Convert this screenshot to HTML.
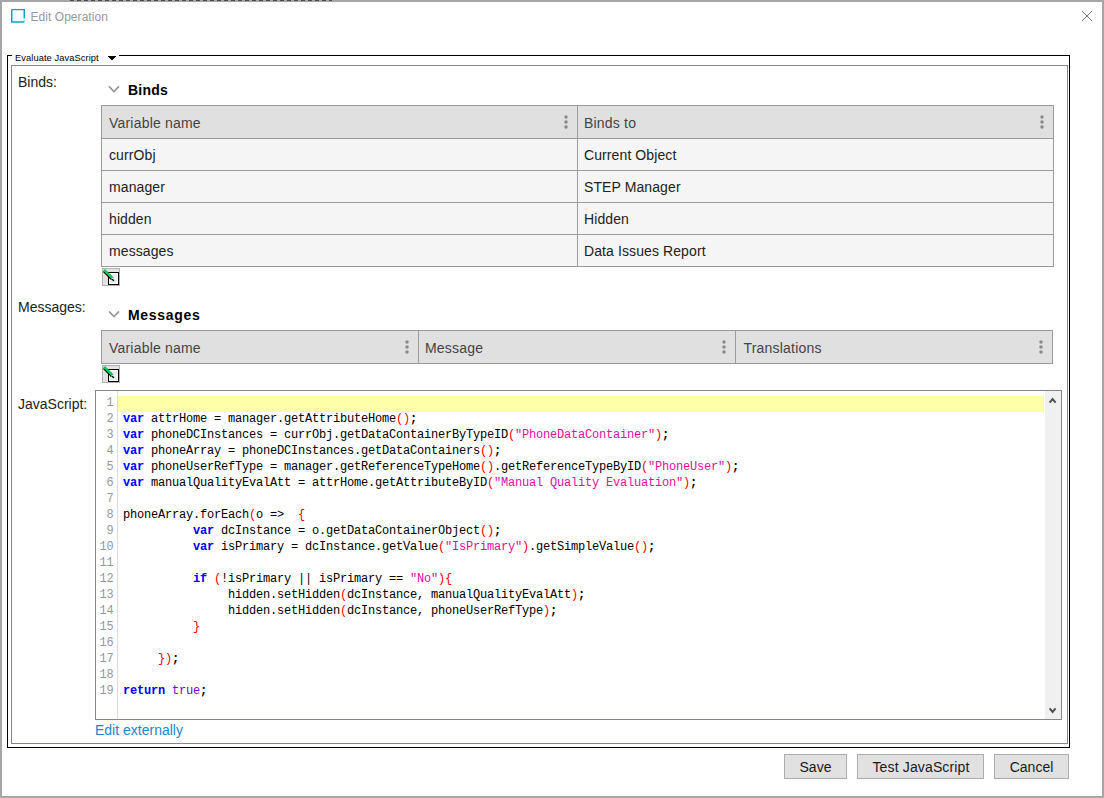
<!DOCTYPE html>
<html lang="en">
<head>
<meta charset="utf-8">
<title>Edit Operation</title>
<style>
html,body{margin:0;padding:0;}
body{width:1104px;height:798px;overflow:hidden;background:#fff;position:relative;
  font-family:"Liberation Sans",sans-serif;font-size:14px;color:#1e1e1e;}
.abs{position:absolute;}
#win{position:absolute;left:0;top:0;width:1100px;height:794px;border:2px solid #a6a6a6;background:#fff;}
.t{position:absolute;white-space:pre;line-height:16px;height:16px;}
#title{left:30.5px;top:9px;font-size:12px;color:#999;letter-spacing:0.05px;}
#fs-l{left:7px;top:55px;width:1px;height:693px;background:#000;}
#fs-r{left:1069px;top:55px;width:1px;height:693px;background:#000;}
#fs-b{left:7px;top:747px;width:1063px;height:1px;background:#000;}
#fs-t1{left:7px;top:55px;width:5px;height:1px;background:#000;}
#fs-t2{left:119px;top:55px;width:951px;height:1px;background:#000;}
#legend{left:15px;top:51px;font-size:9.3px;color:#000;line-height:14px;height:14px;letter-spacing:.08px;}
#panel{left:11px;top:65px;width:1055px;height:677px;border:1px solid #828790;}
.lbl{font-size:14px;color:#222;}
.sec{font-size:14px;font-weight:bold;color:#000;letter-spacing:.25px;}
table.g{position:absolute;border-collapse:collapse;table-layout:fixed;font-size:14px;}
table.g td,table.g th{border:1px solid #9b9b9b;height:31px;padding:0 0 0 7px;text-align:left;font-weight:normal;
  vertical-align:middle;position:relative;overflow:hidden;white-space:nowrap;}
table.g th{background:#e0e0e0;color:#444;height:30px;padding-top:2px;font-size:14px;letter-spacing:.2px;}
table.g td{background:#f5f5f5;color:#222;letter-spacing:.1px;}
table.g td+td,table.g th+th{padding-left:6px;}
table.g th+th+th{padding-left:7.5px;}
.dots{position:absolute;right:9px;top:9px;width:4px;height:14px;}
.dots circle{fill:#8a8a8a;}
.ico{position:absolute;width:16px;height:16px;border:1px solid #adadad;background:#e1e1e1;}
#ed{left:95px;top:390px;width:965px;height:328px;border:1px solid #828790;background:#fff;overflow:hidden;}
#gut{left:117px;top:391px;width:1px;height:328px;background:#dcdcdc;}
#hl{left:118px;top:396px;width:926px;height:16px;background:#ffffaa;}
#sb{left:1045px;top:391px;width:16px;height:328px;background:#f0f0f0;}
.ln{position:absolute;left:96.5px;width:17px;text-align:right;font-family:"Liberation Mono",monospace;font-size:11.9px;
  letter-spacing:-0.141px;color:#989898;margin-top:-1px;line-height:16px;height:16px;white-space:pre;}
.cl{position:absolute;left:123px;font-family:"Liberation Mono",monospace;font-size:12px;letter-spacing:-0.2012px;
  color:#000;line-height:16px;height:16px;white-space:pre;margin-top:-1px;}
.k{color:#0000fa;font-weight:bold;}
.b{color:#6a10c8;}
.p{color:#f00;}
.s{color:#e0109c;}
#link{left:95px;top:722px;color:#1b87cb;}
.btn{position:absolute;top:754px;height:23px;border:1px solid #adadad;background:#e1e1e1;color:#1a1a1a;font-size:14px;
  text-align:center;line-height:25px;}
</style>
</head>
<body>
<div id="win"></div>

<div class="abs" style="left:70px;top:0;width:262px;height:1px;background:repeating-linear-gradient(90deg,#4a4a4a 0 4px,#a6a6a6 4px 7px)"></div>
<!-- title bar -->
<svg class="abs" style="left:11px;top:9px" width="14" height="14" viewBox="0 0 14 14">
  <path d="M0.75 0.5 H13.25 V9.5 M13.25 11.5 V12 M13.5 13 H0.75 V0.5" fill="none" stroke="#0aa5bd" stroke-width="1.5"/>
</svg>
<div class="t" id="title">Edit Operation</div>
<svg class="abs" style="left:1081px;top:10px" width="12" height="12" viewBox="0 0 12 12">
  <path d="M1 1 L11 11 M11 1 L1 11" stroke="#808080" stroke-width="1" fill="none"/>
</svg>

<!-- titled border -->
<div class="abs" id="fs-l"></div><div class="abs" id="fs-r"></div><div class="abs" id="fs-b"></div>
<div class="abs" id="fs-t1"></div><div class="abs" id="fs-t2"></div>
<div class="t" id="legend">Evaluate JavaScript</div>
<svg class="abs" style="left:108px;top:56px" width="8" height="4" viewBox="0 0 8 4" shape-rendering="crispEdges"><path d="M0 0H8V1H7V2H6V3H5V4H3V3H2V2H1V1H0Z" fill="#000"/></svg>
<div class="abs" id="panel"></div>

<!-- Binds -->
<div class="t lbl" style="left:18px;top:74px">Binds:</div>
<svg class="abs" style="left:108px;top:85px" width="12" height="8" viewBox="0 0 12 8"><path d="M1 1.4 L6 6.6 L11 1.4" fill="none" stroke="#979797" stroke-width="1.6"/></svg>
<div class="t sec" style="left:128px;top:82px">Binds</div>
<table class="g" style="left:101px;top:105px;width:953px">
  <colgroup><col style="width:476px"><col style="width:476px"></colgroup>
  <tr><th>Variable name<svg class="dots" width="4" height="14" viewBox="0 0 4 14"><circle cx="2" cy="2" r="1.75"/><circle cx="2" cy="7" r="1.75"/><circle cx="2" cy="12" r="1.75"/></svg></th><th>Binds to<svg class="dots" width="4" height="14" viewBox="0 0 4 14"><circle cx="2" cy="2" r="1.75"/><circle cx="2" cy="7" r="1.75"/><circle cx="2" cy="12" r="1.75"/></svg></th></tr>
  <tr><td>currObj</td><td>Current Object</td></tr>
  <tr><td>manager</td><td>STEP Manager</td></tr>
  <tr><td>hidden</td><td>Hidden</td></tr>
  <tr><td>messages</td><td>Data Issues Report</td></tr>
</table>
<svg class="abs" style="left:102px;top:268px" width="18" height="18" viewBox="0 0 18 18">
  <rect x="0.5" y="0.5" width="17" height="17" fill="#e2e2e2" stroke="#b0b0b0"/>
  <rect x="6.5" y="4.5" width="10" height="12" fill="#fff" stroke="#000"/>
  <rect x="8" y="6" width="7" height="9" fill="#ececec"/>
  <path d="M1.5 3.5 L9.2 11.3" stroke="#000" stroke-width="1.4" fill="none"/>
  <path d="M2.6 2.7 L10.2 9.9" stroke="#00c850" stroke-width="2.3" fill="none" stroke-linecap="round"/>
  <path d="M3.4 1.9 L11.2 9.3" stroke="#009a20" stroke-width="0.9" stroke-dasharray="1 1" fill="none"/>
  <path d="M9.2 10.6 L11 9.4 L11.4 11.6 Z" fill="#fff"/>
  <path d="M10 11.2 L11.6 12.5" stroke="#000" stroke-width="1.4" fill="none" stroke-linecap="round"/>
</svg>

<!-- Messages -->
<div class="t lbl" style="left:18px;top:299px">Messages:</div>
<svg class="abs" style="left:108px;top:310px" width="12" height="8" viewBox="0 0 12 8"><path d="M1 1.4 L6 6.6 L11 1.4" fill="none" stroke="#979797" stroke-width="1.6"/></svg>
<div class="t sec" style="left:128px;top:307px;letter-spacing:.68px">Messages</div>
<table class="g" style="left:101px;top:330px;width:952px">
  <colgroup><col style="width:317px"><col style="width:317px"><col style="width:317px"></colgroup>
  <tr><th>Variable name<svg class="dots" width="4" height="14" viewBox="0 0 4 14"><circle cx="2" cy="2" r="1.75"/><circle cx="2" cy="7" r="1.75"/><circle cx="2" cy="12" r="1.75"/></svg></th><th>Message<svg class="dots" width="4" height="14" viewBox="0 0 4 14"><circle cx="2" cy="2" r="1.75"/><circle cx="2" cy="7" r="1.75"/><circle cx="2" cy="12" r="1.75"/></svg></th><th>Translations<svg class="dots" width="4" height="14" viewBox="0 0 4 14"><circle cx="2" cy="2" r="1.75"/><circle cx="2" cy="7" r="1.75"/><circle cx="2" cy="12" r="1.75"/></svg></th></tr>
</table>
<svg class="abs" style="left:102px;top:365px" width="18" height="18" viewBox="0 0 18 18">
  <rect x="0.5" y="0.5" width="17" height="17" fill="#e2e2e2" stroke="#b0b0b0"/>
  <rect x="6.5" y="4.5" width="10" height="12" fill="#fff" stroke="#000"/>
  <rect x="8" y="6" width="7" height="9" fill="#ececec"/>
  <path d="M1.5 3.5 L9.2 11.3" stroke="#000" stroke-width="1.4" fill="none"/>
  <path d="M2.6 2.7 L10.2 9.9" stroke="#00c850" stroke-width="2.3" fill="none" stroke-linecap="round"/>
  <path d="M3.4 1.9 L11.2 9.3" stroke="#009a20" stroke-width="0.9" stroke-dasharray="1 1" fill="none"/>
  <path d="M9.2 10.6 L11 9.4 L11.4 11.6 Z" fill="#fff"/>
  <path d="M10 11.2 L11.6 12.5" stroke="#000" stroke-width="1.4" fill="none" stroke-linecap="round"/>
</svg>

<!-- JavaScript -->
<div class="t lbl" style="left:18px;top:396px">JavaScript:</div>
<div class="abs" id="ed"></div>
<div class="abs" id="hl"></div>
<div class="abs" id="gut"></div>
<div class="abs" id="sb"></div>
<svg class="abs" style="left:1048px;top:396px" width="10" height="8" viewBox="0 0 10 8"><path d="M1.6 6.6 L4.6 3 L7.6 6.6" fill="none" stroke="#505050" stroke-width="2"/></svg>
<svg class="abs" style="left:1048px;top:707px" width="10" height="8" viewBox="0 0 10 8"><path d="M1.6 1.4 L4.6 5 L7.6 1.4" fill="none" stroke="#505050" stroke-width="2"/></svg>
<div id="code">
<div class="ln" style="top:396px">1</div><div class="cl" style="top:396px"></div>
<div class="ln" style="top:412px">2</div><div class="cl" style="top:412px"><span class="k">var</span> attrHome = manager.getAttributeHome<span class="p">()</span><b>;</b></div>
<div class="ln" style="top:428px">3</div><div class="cl" style="top:428px"><span class="k">var</span> phoneDCInstances = currObj.getDataContainerByTypeID<span class="p">(</span><span class="s">"PhoneDataContainer"</span><span class="p">)</span><b>;</b></div>
<div class="ln" style="top:444px">4</div><div class="cl" style="top:444px"><span class="k">var</span> phoneArray = phoneDCInstances.getDataContainers<span class="p">()</span><b>;</b></div>
<div class="ln" style="top:460px">5</div><div class="cl" style="top:460px"><span class="k">var</span> phoneUserRefType = manager.getReferenceTypeHome<span class="p">()</span>.getReferenceTypeByID<span class="p">(</span><span class="s">"PhoneUser"</span><span class="p">)</span><b>;</b></div>
<div class="ln" style="top:476px">6</div><div class="cl" style="top:476px"><span class="k">var</span> manualQualityEvalAtt = attrHome.getAttributeByID<span class="p">(</span><span class="s">"Manual Quality Evaluation"</span><span class="p">)</span><b>;</b></div>
<div class="ln" style="top:492px">7</div><div class="cl" style="top:492px"></div>
<div class="ln" style="top:508px">8</div><div class="cl" style="top:508px">phoneArray.forEach<span class="p">(</span>o =&gt;  <span class="p">{</span></div>
<div class="ln" style="top:524px">9</div><div class="cl" style="top:524px">          <span class="k">var</span> dcInstance = o.getDataContainerObject<span class="p">()</span><b>;</b></div>
<div class="ln" style="top:540px">10</div><div class="cl" style="top:540px">          <span class="k">var</span> isPrimary = dcInstance.getValue<span class="p">(</span><span class="s">"IsPrimary"</span><span class="p">)</span>.getSimpleValue<span class="p">()</span><b>;</b></div>
<div class="ln" style="top:556px">11</div><div class="cl" style="top:556px"></div>
<div class="ln" style="top:572px">12</div><div class="cl" style="top:572px">          <span class="k">if</span> <span class="p">(</span>!isPrimary || isPrimary == <span class="s">"No"</span><span class="p">){</span></div>
<div class="ln" style="top:588px">13</div><div class="cl" style="top:588px">               hidden.setHidden<span class="p">(</span>dcInstance, manualQualityEvalAtt<span class="p">)</span><b>;</b></div>
<div class="ln" style="top:604px">14</div><div class="cl" style="top:604px">               hidden.setHidden<span class="p">(</span>dcInstance, phoneUserRefType<span class="p">)</span><b>;</b></div>
<div class="ln" style="top:620px">15</div><div class="cl" style="top:620px">          <span class="p">}</span></div>
<div class="ln" style="top:636px">16</div><div class="cl" style="top:636px"></div>
<div class="ln" style="top:652px">17</div><div class="cl" style="top:652px">     <span class="p">})</span><b>;</b></div>
<div class="ln" style="top:668px">18</div><div class="cl" style="top:668px"></div>
<div class="ln" style="top:684px">19</div><div class="cl" style="top:684px"><span class="k">return</span> <span class="b">true</span><b>;</b></div>
</div>

<div class="t" id="link">Edit externally</div>

<!-- buttons -->
<div class="btn" style="left:784px;width:61px">Save</div>
<div class="btn" style="left:857px;width:125px;letter-spacing:.14px;text-indent:1px">Test JavaScript</div>
<div class="btn" style="left:994px;width:73px">Cancel</div>
</body>
</html>
